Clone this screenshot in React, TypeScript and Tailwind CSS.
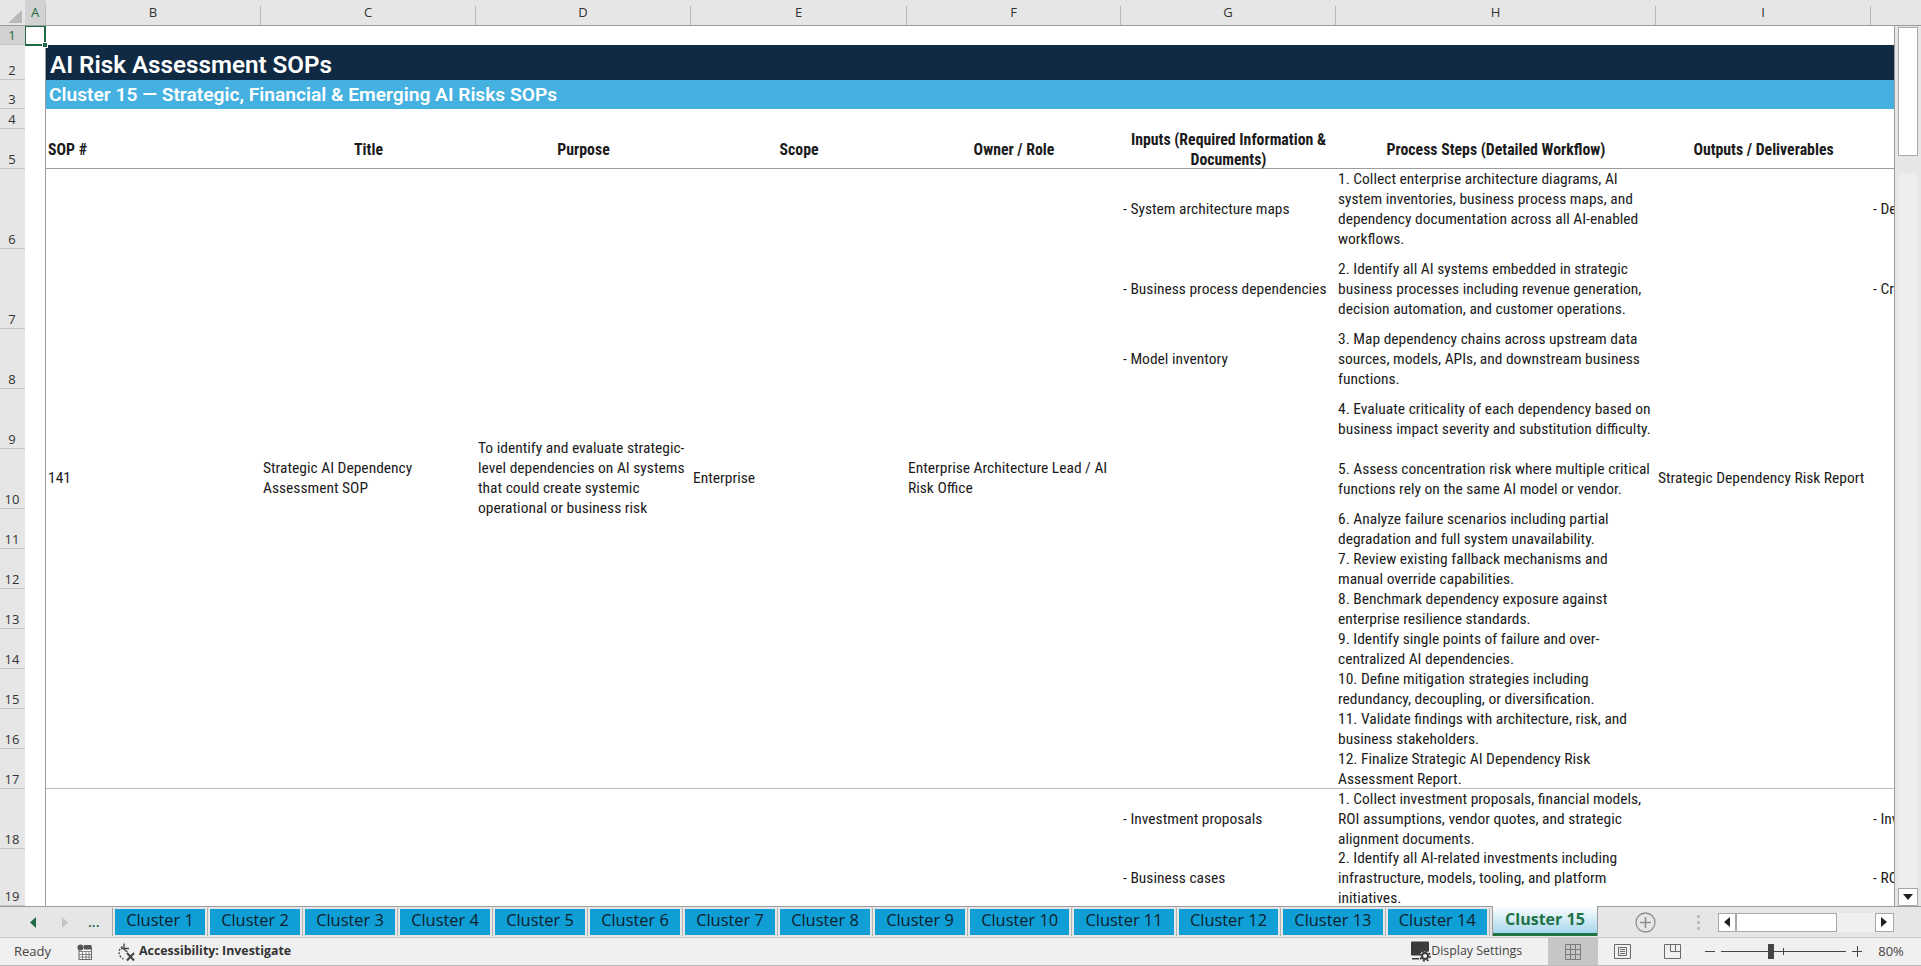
const sheetFont = "font-['Roboto',sans-serif] [font-stretch:75%] text-[15.5px] leading-[20px] text-[#1b1b1b]";
const uiFont = "font-['Open_Sans',sans-serif]";

const columns = ["A", "B", "C", "D", "E", "F", "G", "H", "I", "J"];
const rowNumbers = [
  { n: 1, cls: "bg-[#d2d2d2] text-[#1f6b43]" },
  ...[2, 3, 4, 5, 6, 7, 8, 9, 10, 11, 12, 13, 14, 15, 16, 17, 18, 19].map((n) => ({ n, cls: "text-[#333]" })),
];

const inputs = [
  { row: "row-start-6", text: "- System architecture maps" },
  { row: "row-start-7", text: "- Business process dependencies" },
  { row: "row-start-8", text: "- Model inventory" },
  { row: "row-start-18", text: "- Investment proposals" },
  { row: "row-start-19", text: "- Business cases" },
];

const steps = [
  { row: "row-start-6", text: "1. Collect enterprise architecture diagrams, AI\nsystem inventories, business process maps, and\ndependency documentation across all AI-enabled\nworkflows." },
  { row: "row-start-7", text: "2. Identify all AI systems embedded in strategic\nbusiness processes including revenue generation,\ndecision automation, and customer operations." },
  { row: "row-start-8", text: "3. Map dependency chains across upstream data\nsources, models, APIs, and downstream business\nfunctions." },
  { row: "row-start-9", text: "4. Evaluate criticality of each dependency based on\nbusiness impact severity and substitution difficulty." },
  { row: "row-start-10", text: "5. Assess concentration risk where multiple critical\nfunctions rely on the same AI model or vendor." },
  { row: "row-start-11", text: "6. Analyze failure scenarios including partial\ndegradation and full system unavailability." },
  { row: "row-start-12", text: "7. Review existing fallback mechanisms and\nmanual override capabilities." },
  { row: "row-start-13", text: "8. Benchmark dependency exposure against\nenterprise resilience standards." },
  { row: "row-start-14", text: "9. Identify single points of failure and over-\ncentralized AI dependencies." },
  { row: "row-start-15", text: "10. Define mitigation strategies including\nredundancy, decoupling, or diversification." },
  { row: "row-start-16", text: "11. Validate findings with architecture, risk, and\nbusiness stakeholders." },
  { row: "row-start-17", text: "12. Finalize Strategic AI Dependency Risk\nAssessment Report." },
  { row: "row-start-18", text: "1. Collect investment proposals, financial models,\nROI assumptions, vendor quotes, and strategic\nalignment documents." },
  { row: "row-start-19", text: "2. Identify all AI-related investments including\ninfrastructure, models, tooling, and platform\ninitiatives." },
];

const outputs = [
  { row: "row-start-6", text: "- Dependency" },
  { row: "row-start-7", text: "- Critical" },
  { row: "row-start-18", text: "- Investment" },
  { row: "row-start-19", text: "- ROI" },
];

const narrowTabs = ["Cluster 1", "Cluster 2", "Cluster 3", "Cluster 4", "Cluster 5", "Cluster 6", "Cluster 7", "Cluster 8", "Cluster 9"];
const wideTabs = ["Cluster 10", "Cluster 11", "Cluster 12", "Cluster 13", "Cluster 14"];

function ColumnHeader() {
  return (
    <div className={`${uiFont} grid h-[26px] shrink-0 grid-cols-[25px_21px_215px_215px_215px_216px_214px_215px_320px_215px_25px] border-b border-[#9c9c9c] text-[13px] text-[#333]`}>
      <div className="relative">
        <svg className="absolute left-[8px] top-[10px]" width="14" height="13" viewBox="0 0 14 13">
          <path d="M14 0V13H0Z" fill="#b9b9b9" />
        </svg>
      </div>
      {columns.map((c) => (
        <div
          key={c}
          className={
            c === "A"
              ? "flex items-center justify-center bg-[#d2d2d2] text-[#1f6b43]"
              : "flex items-center justify-center"
          }
        >
          <span className="flex-1 text-center">{c === "J" ? "" : c}</span>
          <span className={c === "J" ? "hidden" : "mt-[6px] h-[19px] w-px bg-[#b8b8b8]"} />
        </div>
      ))}
    </div>
  );
}

function RowHeader() {
  return (
    <div className={`${uiFont} grid h-full w-[26px] shrink-0 grid-rows-[19px_35px_29px_20px_40px_80px_80px_60px_60px_60px_40px_40px_40px_40px_40px_40px_40px_60px_57px] border-r border-[#9c9c9c] text-[13px] leading-[17px]`}>
      {rowNumbers.map((r) => (
        <div key={r.n} className={`flex items-end justify-center border-b border-[#c4c4c4] pr-px ${r.cls}`}>
          {r.n}
        </div>
      ))}
    </div>
  );
}

function Sheet() {
  return (
    <div className={`${sheetFont} grid h-full w-[1870px] shrink-0 grid-cols-[21px_215px_215px_215px_216px_214px_215px_320px_215px_24px] grid-rows-[19px_35px_29px_20px_40px_80px_80px_60px_60px_60px_40px_40px_40px_40px_40px_40px_40px_60px_57px] overflow-hidden border-r border-[#9c9c9c] bg-white`}>
      {/* column A with the selected cell */}
      <div className="col-start-1 row-start-1 row-span-19 border-r border-[#9c9c9c]" />
      <div className="relative col-start-1 row-start-1">
        <div className="absolute -left-px -top-px h-[21px] w-[22px] border-2 border-[#1f6b43]" />
        <div className="absolute left-[17px] top-[16px] h-[6px] w-[6px] border border-white bg-[#1f6b43]" />
      </div>

      {/* banners */}
      <div className="col-start-2 col-span-9 row-start-2 flex items-center bg-[#102a43] pl-[4px] pt-[5px] text-[24.2px] font-semibold leading-[30px] text-white [font-stretch:100%]">
        AI Risk Assessment SOPs
      </div>
      <div className="col-start-2 col-span-9 row-start-3 flex items-center bg-[#45b1e1] pl-[3px] text-[19.2px] font-semibold leading-[29px] text-white [font-stretch:100%]">
        Cluster 15 — Strategic, Financial &amp; Emerging AI Risks SOPs
      </div>

      {/* header row */}
      <div className="col-start-2 col-span-9 row-start-5 border-b border-[#9c9c9c]" />
      <div className="col-start-2 row-start-5 flex items-center pl-[2px] pt-[2px] text-[15.8px] font-bold">SOP #</div>
      <div className="col-start-3 row-start-5 flex items-center justify-center pt-[2px] text-[15.8px] font-bold">Title</div>
      <div className="col-start-4 row-start-5 flex items-center justify-center pt-[2px] text-[15.8px] font-bold">Purpose</div>
      <div className="col-start-5 row-start-5 flex items-center justify-center pt-[2px] text-[15.8px] font-bold">Scope</div>
      <div className="col-start-6 row-start-5 flex items-center justify-center pt-[2px] text-[15.8px] font-bold">Owner / Role</div>
      <div className="col-start-7 row-start-5 flex items-center justify-center whitespace-pre pt-[2px] text-center text-[15.8px] font-bold">
        {"Inputs (Required Information &\nDocuments)"}
      </div>
      <div className="col-start-8 row-start-5 flex items-center justify-center whitespace-pre pt-[2px] text-[15.8px] font-bold">Process Steps (Detailed Workflow)</div>
      <div className="col-start-9 row-start-5 flex items-center justify-center whitespace-pre pt-[2px] text-[15.8px] font-bold">Outputs / Deliverables</div>

      {/* first SOP */}
      <div className="col-start-2 col-span-9 row-start-6 row-span-12 border-b border-[#bdbdbd]" />
      <div className="col-start-2 row-start-6 row-span-12 flex items-center pb-[2px] pl-[2px]">141</div>
      <div className="col-start-3 row-start-6 row-span-12 flex items-center whitespace-pre pb-[2px] pl-[2px]">{"Strategic AI Dependency\nAssessment SOP"}</div>
      <div className="col-start-4 row-start-6 row-span-12 flex items-center whitespace-pre pb-[2px] pl-[2px]">
        {"To identify and evaluate strategic-\nlevel dependencies on AI systems\nthat could create systemic\noperational or business risk"}
      </div>
      <div className="col-start-5 row-start-6 row-span-12 flex items-center pb-[2px] pl-[2px]">Enterprise</div>
      <div className="col-start-6 row-start-6 row-span-12 flex items-center whitespace-pre pb-[2px] pl-[1px]">{"Enterprise Architecture Lead / AI\nRisk Office"}</div>
      <div className="col-start-9 row-start-6 row-span-12 flex items-center whitespace-pre pb-[2px] pl-[2px]">Strategic Dependency Risk Report</div>

      {inputs.map((c) => (
        <div key={c.text} className={`col-start-7 ${c.row} flex items-center whitespace-pre pl-[2px]`}>
          {c.text}
        </div>
      ))}
      {steps.map((c) => (
        <div key={c.text} className={`col-start-8 ${c.row} flex items-center whitespace-pre pl-[2px]`}>
          {c.text}
        </div>
      ))}
      {outputs.map((c) => (
        <div key={c.text} className={`col-start-10 ${c.row} flex items-center overflow-hidden whitespace-pre pl-[2px]`}>
          {c.text}
        </div>
      ))}
    </div>
  );
}

function VerticalScrollbar() {
  return (
    <div className="flex h-full flex-1 flex-col items-center bg-[#e6e6e6] pl-[1px] pr-[2px]">
      <div className="flex h-[18px] w-[20px] shrink-0 -translate-y-[18px] items-center justify-center border border-[#a8a8a8] bg-white">
        <svg width="10" height="6" viewBox="0 0 10 6"><path d="M5 0L10 6H0Z" fill="#222" /></svg>
      </div>
      <div className="h-[129px] w-[20px] shrink-0 -translate-y-[17px] border border-[#a8a8a8] bg-white" />
      <div className="w-[20px] flex-1 bg-[#ededed]" />
      <div className="flex h-[18px] w-[20px] shrink-0 items-center justify-center border border-[#a8a8a8] bg-white">
        <svg width="10" height="6" viewBox="0 0 10 6"><path d="M0 0H10L5 6Z" fill="#222" /></svg>
      </div>
    </div>
  );
}

function TabBar() {
  return (
    <div className={`${uiFont} flex h-[32px] shrink-0 items-stretch border-b border-[#c8c8c8] border-t border-t-[#9c9c9c] bg-[#e6e6e6] text-[16.4px] text-[#10222c]`}>
      <div className="flex w-[112px] shrink-0 items-center pl-[30px]">
        <svg width="6" height="11" viewBox="0 0 6 11"><path d="M6 0V11L0 5.5Z" fill="#1f6b43" /></svg>
        <svg className="ml-[26px]" width="6" height="11" viewBox="0 0 6 11"><path d="M0 0V11L6 5.5Z" fill="#c4c4c4" /></svg>
        <span className="ml-[20px] text-[14px] font-semibold leading-[14px] text-[#1f6b43]">...</span>
      </div>
      <div className="my-[1px] w-px bg-[#a8a8a8]" />
      <div className="flex items-stretch pl-[2px]">
        {narrowTabs.map((t) => (
          <div key={t} className="flex items-center">
            <div className="flex h-[26px] w-[90px] items-center justify-center bg-[#0f9ed5] pb-[4px]">{t}</div>
            <div className="mx-[2px] h-[28px] w-px bg-[#b4b4b4]" />
          </div>
        ))}
        {wideTabs.map((t) => (
          <div key={t} className="flex items-center">
            <div className="flex h-[26px] w-[99.4px] items-center justify-center bg-[#0f9ed5] pb-[4px]">{t}</div>
            <div className="mx-[2px] h-[28px] w-px bg-[#b4b4b4]" />
          </div>
        ))}
      </div>
      <div className="-mt-px flex h-[30px] w-[106px] shrink-0 flex-col border-x border-[#9c9c9c] bg-white">
        <div className="flex flex-1 items-center justify-center bg-gradient-to-b from-white to-[#a4d7ec] pb-[2px] text-[16px] font-bold text-[#217346]">Cluster 15</div>
        <div className="h-[3px] bg-[#217346]" />
      </div>
      <div className="flex flex-1 items-center">
        <svg className="ml-[37px]" width="21" height="21" viewBox="0 0 21 21" fill="none" stroke="#8f8f8f">
          <circle cx="10.5" cy="10.5" r="9.5" strokeWidth="1.3" />
          <path d="M10.5 5v11M5 10.5h11" strokeWidth="1.6" />
        </svg>
        <div className="ml-[41px] flex h-[15px] flex-col justify-between">
          <span className="h-[3px] w-[3px] bg-[#bdbdbd]" />
          <span className="h-[3px] w-[3px] bg-[#bdbdbd]" />
          <span className="h-[3px] w-[3px] bg-[#bdbdbd]" />
        </div>
        <div className="ml-[18px] flex h-[19px] items-stretch bg-[#f0f0f0]">
          <div className="flex w-[18px] items-center justify-center border border-[#a8a8a8] bg-white">
            <svg width="6" height="10" viewBox="0 0 6 10"><path d="M6 0V10L0 5Z" fill="#222" /></svg>
          </div>
          <div className="w-[101px] border border-[#a8a8a8] bg-white" />
          <div className="w-[38px]" />
          <div className="flex w-[19px] items-center justify-center border border-[#a8a8a8] bg-white">
            <svg width="6" height="10" viewBox="0 0 6 10"><path d="M0 0V10L6 5Z" fill="#222" /></svg>
          </div>
        </div>
      </div>
    </div>
  );
}

function StatusBar() {
  return (
    <div className={`${uiFont} flex h-[28px] shrink-0 items-center border-b border-[#bcbcbc] bg-[#f0f0f0] text-[13px] text-[#444]`}>
      <span className="ml-[14px] w-[63px]">Ready</span>
      <svg width="15" height="16" viewBox="0 0 15 16" fill="none">
        <rect x="2" y="3.5" width="12.5" height="12" fill="#fff" stroke="#6b6b6b" />
        <path d="M2 7.5h12.5M2 10.5h12.5M2 13h12.5M5.5 7.5v8M9 7.5v8M12 7.5v8" stroke="#6b6b6b" strokeWidth=".8" />
        <circle cx="3.5" cy="3.5" r="3" fill="#555" />
        <rect x="7" y="1" width="7.5" height="4.5" fill="#555" />
      </svg>
      <svg className="ml-[24px]" width="21" height="20" viewBox="0 0 21 20" fill="none" stroke="#444" strokeWidth="1.3">
        <path d="M6.5 4.5a7 7 0 0 0 1 12.5" strokeDasharray="2 1.4" />
        <path d="M8 1.5v6M5 6.5h8M8 7.5l3.5 2.5" />
        <path d="M11 11l7 7.5M18 11l-7 7.5" strokeWidth="2" />
      </svg>
      <span className="ml-[2px] text-[12.4px] font-bold text-[#333]">Accessibility: Investigate</span>
      <div className="ml-[1119px] flex w-[113px] items-center">
        <svg width="21" height="21" viewBox="0 0 21 21">
          <path d="M1 1.5A1 1 0 0 1 2 .5h16a1 1 0 0 1 1 1v9h-7l-3 4H2a1 1 0 0 1-1-1Z" fill="#3b3b3b" />
          <path d="M2 17h7v1.5H2z" fill="#3b3b3b" />
          <circle cx="15" cy="15" r="3" fill="none" stroke="#3b3b3b" strokeWidth="2" />
          <circle cx="15" cy="15" r="5" fill="none" stroke="#3b3b3b" strokeWidth="1.6" strokeDasharray="2 1.9" />
        </svg>
        <span className="whitespace-nowrap text-[12.4px]">Display Settings</span>
      </div>
      <div className="ml-[25px] flex h-full w-[50px] items-center justify-center bg-[#c6c6c6]">
        <svg width="16" height="16" viewBox="0 0 16 16" fill="none" stroke="#7a7a7a">
          <path d="M.5.5h15v15H.5zM.5 5.5h15M.5 10.5h15M5.5.5v15M10.5.5v15" />
        </svg>
      </div>
      <svg className="ml-[16px]" width="17" height="17" viewBox="0 0 17 17" fill="none" stroke="#6a6a6a">
        <path d="M.5 1.5h16v14H.5zM4.5 4.5h8v8h-8zM6 6.5h5M6 8.5h5M6 10.5h5" />
      </svg>
      <svg className="ml-[33px]" width="17" height="17" viewBox="0 0 17 17" fill="none" stroke="#6a6a6a">
        <path d="M.5 1.5h16v14H.5zM6.5 1.5v7h10M11.5 1.5v7" />
      </svg>
      <div className="ml-[24px] h-px w-[10px] bg-[#444]" />
      <div className="relative ml-[6px] h-px w-[125px] bg-[#444]">
        <div className="absolute left-[47px] -top-[7px] h-[15px] w-[6px] bg-[#444]" />
        <div className="absolute left-[62px] -top-[3px] h-[7px] w-px bg-[#444]" />
      </div>
      <div className="relative ml-[6px] h-px w-[10px] bg-[#444]">
        <div className="absolute left-[4.5px] -top-[5px] h-[11px] w-px bg-[#444]" />
      </div>
      <span className="ml-[16px]">80%</span>
    </div>
  );
}

export default function App() {
  return (
    <div className="flex h-[966px] w-[1921px] flex-col overflow-hidden bg-[#e6e6e6]">
      <ColumnHeader />
      <div className="flex h-[880px] shrink-0">
        <RowHeader />
        <div className="-ml-px flex-1 overflow-hidden">
          <div className="flex h-full">
            <Sheet />
            <VerticalScrollbar />
          </div>
        </div>
      </div>
      <TabBar />
      <StatusBar />
    </div>
  );
}
